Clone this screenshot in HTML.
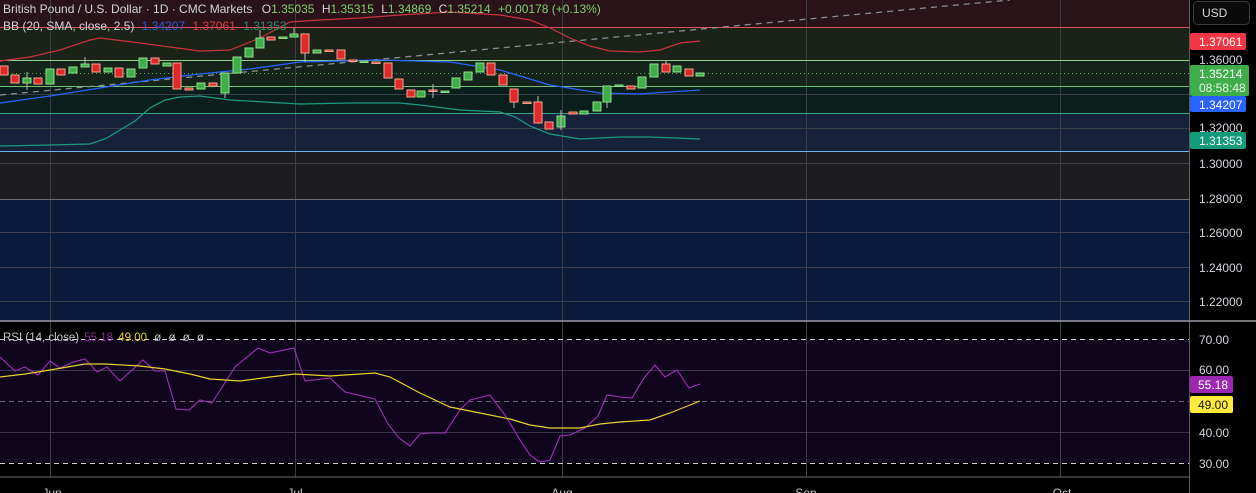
<!DOCTYPE html>
<html><head><meta charset="utf-8"><style>
html,body{margin:0;padding:0;background:#000;width:1256px;height:493px;overflow:hidden}
svg{display:block}
text{font-family:"Liberation Sans",sans-serif}
</style></head><body>
<svg width="1256" height="493" viewBox="0 0 1256 493" xmlns="http://www.w3.org/2000/svg">
<rect x="0" y="0" width="1189" height="27" fill="#2a1318"/>
<rect x="0" y="27" width="1189" height="33" fill="#1b2319"/>
<rect x="0" y="60" width="1189" height="26" fill="#14241a"/>
<rect x="0" y="86" width="1189" height="27" fill="#0a1f1b"/>
<rect x="0" y="113" width="1189" height="38" fill="#15223a"/>
<rect x="0" y="151" width="1189" height="48" fill="#1d1d1f"/>
<rect x="0" y="199" width="1189" height="122" fill="#0a1a3a"/>
<g stroke="#3a3f4a" stroke-width="1">
<line x1="50.5" y1="0" x2="50.5" y2="477"/><line x1="295.5" y1="0" x2="295.5" y2="477"/><line x1="562.5" y1="0" x2="562.5" y2="477"/><line x1="806.5" y1="0" x2="806.5" y2="477"/><line x1="1060.5" y1="0" x2="1060.5" y2="477"/>
<line x1="0" y1="94.5" x2="1189" y2="94.5"/><line x1="0" y1="128.5" x2="1189" y2="128.5"/><line x1="0" y1="163.5" x2="1189" y2="163.5"/><line x1="0" y1="232.5" x2="1189" y2="232.5"/><line x1="0" y1="267.5" x2="1189" y2="267.5"/><line x1="0" y1="301.5" x2="1189" y2="301.5"/>
</g>
<line x1="0" y1="199.5" x2="1189" y2="199.5" stroke="#6a6d75"/>
<line x1="0" y1="27.5" x2="1189" y2="27.5" stroke="#e0505a"/>
<line x1="0" y1="60.5" x2="1189" y2="60.5" stroke="#8fd08a"/>
<line x1="0" y1="86.5" x2="1189" y2="86.5" stroke="#6cc070"/>
<line x1="0" y1="113.5" x2="1189" y2="113.5" stroke="#3aa08a"/>
<line x1="0" y1="151.5" x2="1189" y2="151.5" stroke="#6ab4e8"/>
<line x1="0" y1="73.5" x2="1189" y2="73.5" stroke="#4caf50" stroke-dasharray="1,3"/>
<line x1="0" y1="95" x2="1010" y2="0" stroke="#8a8d95" stroke-width="1.3" stroke-dasharray="6,5"/>
<polyline fill="none" stroke="#c8343f" stroke-width="1.2" points="0,61 30,57 60,50 90,40 100,38 140,43 200,51 230,50 260,38 290,22 320,20 360,18 400,15 450,12 500,15 530,20 550,28 570,38 590,46 610,51 640,52 660,50 680,43 700,41"/>
<polyline fill="none" stroke="#2962ff" stroke-width="1.3" points="0,103 50,96 100,88 150,80 200,74 250,69 300,62 380,60 450,62 500,70 550,85 600,93 640,94 700,90"/>
<polyline fill="none" stroke="#1e9b80" stroke-width="1.2" points="0,146 50,145 90,144 105,139 120,130 135,121 150,108 165,100 180,97 200,96 230,100 300,104 350,103 400,103 420,105 460,110 500,112 515,117 530,126 550,134 580,139 620,137 650,137 700,139"/>
<g stroke-width="1">
<g fill="#e0292a" stroke="#f5a48c">
<rect x="0" y="66" width="8" height="9"/><rect x="11" y="75" width="8" height="8"/><rect x="34" y="78" width="8" height="6"/><rect x="57" y="69" width="8" height="6"/><rect x="92" y="64" width="8" height="8"/><rect x="115" y="68" width="8" height="9"/><rect x="151" y="58" width="8" height="6"/><rect x="173" y="63" width="8" height="26"/><rect x="185" y="88" width="8" height="2"/><rect x="209" y="83" width="8" height="3"/><rect x="267" y="37" width="8" height="3"/><rect x="301" y="34" width="8" height="19"/><rect x="325" y="50" width="8" height="1.5"/><rect x="337" y="50" width="8" height="9"/><rect x="349" y="60" width="8" height="1.5"/><rect x="372" y="62" width="8" height="1.5"/><rect x="384" y="63" width="8" height="15"/><rect x="395" y="79" width="8" height="10"/><rect x="407" y="90" width="8" height="7"/><rect x="429" y="90" width="8" height="1.5"/><rect x="487" y="63" width="8" height="12"/><rect x="499" y="75" width="8" height="10"/><rect x="510" y="89" width="8" height="13"/><rect x="523" y="102" width="8" height="1.5"/><rect x="534" y="102" width="8" height="21"/><rect x="545" y="122" width="8" height="7"/><rect x="569" y="112" width="8" height="2"/><rect x="627" y="86" width="8" height="3"/><rect x="662" y="64" width="8" height="8"/><rect x="685" y="69" width="8" height="7"/>
</g>
<g fill="#3fae4a" stroke="#8fdc8a">
<rect x="23" y="78" width="8" height="5"/><rect x="46" y="69" width="8" height="15"/><rect x="69" y="67" width="8" height="6"/><rect x="81" y="64" width="8" height="3"/><rect x="104" y="68" width="8" height="4"/><rect x="127" y="69" width="8" height="8"/><rect x="139" y="58" width="8" height="10"/><rect x="163" y="63" width="8" height="3"/><rect x="197" y="83" width="8" height="6"/><rect x="221" y="73" width="8" height="20"/><rect x="233" y="57" width="8" height="16"/><rect x="245" y="48" width="8" height="9"/><rect x="256" y="38" width="8" height="10"/><rect x="279" y="37" width="8" height="1.5"/><rect x="290" y="34" width="8" height="3"/><rect x="313" y="50" width="8" height="3"/><rect x="360" y="61" width="8" height="1.5"/><rect x="417" y="91" width="8" height="6"/><rect x="441" y="91" width="8" height="1.5"/><rect x="452" y="78" width="8" height="10"/><rect x="464" y="72" width="8" height="8"/><rect x="476" y="63" width="8" height="9"/><rect x="557" y="116" width="8" height="11"/><rect x="580" y="111" width="8" height="3"/><rect x="593" y="102" width="8" height="9"/><rect x="603" y="86" width="8" height="16"/><rect x="615" y="85" width="8" height="1.5"/><rect x="638" y="77" width="8" height="11"/><rect x="650" y="64" width="8" height="13"/><rect x="673" y="66" width="8" height="6"/><rect x="696" y="73" width="8" height="3"/>
</g>
</g>
<g stroke="#bbb" stroke-width="1">
<line x1="27" y1="72" x2="27" y2="78"/><line x1="27" y1="83" x2="27" y2="90"/><line x1="85" y1="57" x2="85" y2="64"/><line x1="225" y1="93" x2="225" y2="98"/><line x1="260" y1="30" x2="260" y2="38"/><line x1="294" y1="28" x2="294" y2="34"/><line x1="305" y1="53" x2="305" y2="62"/><line x1="433" y1="84" x2="433" y2="98"/><line x1="514" y1="102" x2="514" y2="108"/><line x1="561" y1="110" x2="561" y2="130"/><line x1="538" y1="96" x2="538" y2="102"/><line x1="607" y1="102" x2="607" y2="108"/><line x1="666" y1="60" x2="666" y2="64"/></g>
<text x="3" y="13" font-size="12" fill="#d1d4dc">British Pound / U.S. Dollar · 1D · CMC Markets <tspan dx="6">O</tspan><tspan fill="#7ed06e">1.35035</tspan> <tspan dx="4">H</tspan><tspan fill="#7ed06e">1.35315</tspan> <tspan dx="4">L</tspan><tspan fill="#7ed06e">1.34869</tspan> <tspan dx="4">C</tspan><tspan fill="#7ed06e">1.35214</tspan> <tspan dx="4" fill="#7ed06e">+0.00178 (+0.13%)</tspan></text>
<text x="3" y="30" font-size="12" fill="#d1d4dc">BB (20, SMA, close, 2.5) <tspan dx="4" fill="#2a5ad8">1.34207</tspan> <tspan dx="4" fill="#d83a40">1.37061</tspan> <tspan dx="4" fill="#1e8e72">1.31353</tspan></text>
<line x1="0" y1="321" x2="1256" y2="321" stroke="#9a9da5" stroke-width="1.5"/>
<rect x="0" y="339" width="1189" height="124" fill="#10051c"/>
<g stroke="#3a3448"><line x1="0" y1="370.5" x2="1189" y2="370.5"/><line x1="0" y1="432.5" x2="1189" y2="432.5"/></g>
<g stroke="#3a3f4a"><line x1="50.5" y1="322" x2="50.5" y2="477"/><line x1="295.5" y1="322" x2="295.5" y2="477"/><line x1="562.5" y1="322" x2="562.5" y2="477"/><line x1="806.5" y1="322" x2="806.5" y2="477"/><line x1="1060.5" y1="322" x2="1060.5" y2="477"/></g>
<line x1="0" y1="401.5" x2="1189" y2="401.5" stroke="#6a6470" stroke-dasharray="5,4"/>
<line x1="0" y1="339.5" x2="1189" y2="339.5" stroke="#d0d0d0" stroke-dasharray="5,4"/>
<line x1="0" y1="463.5" x2="1189" y2="463.5" stroke="#d0d0d0" stroke-dasharray="5,4"/>
<polyline fill="none" stroke="#a030b8" stroke-width="1.1" points="0,357 15,371 25,367 38,375 50,361 60,368 73,362 85,359 97,372 107,367 120,381 143,360 155,371 165,371 176,409 189,410 200,400 212,403 235,367 258,348 270,353 294,348 305,381 330,378 345,392 375,399 388,424 398,437 410,446 420,434 430,433 445,433 460,410 470,400 490,395 505,415 520,440 530,455 540,462 550,460 560,436 570,435 585,428 598,416 607,395 620,397 632,398 644,378 655,365 665,377 677,370 689,388 700,384"/>
<polyline fill="none" stroke="#e8d030" stroke-width="1.2" points="0,377 25,374 50,370 85,364 105,364 140,366 165,369 190,374 210,379 240,381 270,377 295,374 330,376 375,373 390,377 420,393 450,407 480,413 510,419 530,425 550,428 580,428 600,424 620,422 650,420 670,413 690,405 700,401"/>
<text x="3" y="341" font-size="11.5" fill="#c8c8cc">RSI (14, close) <tspan fill="#8a2a9a" dx="2">55.18</tspan> <tspan fill="#e8d030" dx="2">49.00</tspan> <tspan dx="4">ø</tspan> <tspan dx="4">ø</tspan> <tspan dx="4">ø</tspan> <tspan dx="4">ø</tspan></text>
<line x1="0" y1="477" x2="1256" y2="477" stroke="#6a6d75"/>
<g font-size="12" fill="#c8c8cc" text-anchor="middle"><text x="52" y="497">Jun</text><text x="295" y="497">Jul</text><text x="562" y="497">Aug</text><text x="806" y="497">Sep</text><text x="1062" y="497">Oct</text></g>
<rect x="1189" y="0" width="67" height="493" fill="#000"/>
<line x1="1189.5" y1="0" x2="1189.5" y2="493" stroke="#5a5d65"/>
<line x1="1189" y1="321" x2="1256" y2="321" stroke="#9a9da5" stroke-width="1.5"/>
<rect x="1193.5" y="1.5" width="56" height="23" rx="4" fill="#0a0a0a" stroke="#3a3a3a"/>
<text x="1202" y="17" font-size="12" fill="#d8d8d8">USD</text>
<g font-size="12" fill="#d1d4dc">
<text x="1199" y="64">1.36000</text><text x="1199" y="132">1.32000</text><text x="1199" y="168">1.30000</text><text x="1199" y="203">1.28000</text><text x="1199" y="237">1.26000</text><text x="1199" y="272">1.24000</text><text x="1199" y="306">1.22000</text>
<text x="1199" y="344">70.00</text><text x="1199" y="374">60.00</text><text x="1199" y="437">40.00</text><text x="1199" y="468">30.00</text>
</g>
<rect x="1190" y="33" width="56" height="17" rx="2" fill="#f23645"/><text x="1199" y="46" font-size="12" fill="#fff">1.37061</text>
<rect x="1190" y="65" width="59" height="31" rx="2" fill="#3fae4a"/><text x="1199" y="78" font-size="12" fill="#fff">1.35214</text><text x="1199" y="92" font-size="12" fill="#e6f5e6">08:58:48</text>
<rect x="1190" y="96" width="56" height="16" rx="2" fill="#2962ff"/><text x="1199" y="109" font-size="12" fill="#fff">1.34207</text>
<rect x="1190" y="132" width="56" height="17" rx="2" fill="#129a7a"/><text x="1199" y="145" font-size="12" fill="#fff">1.31353</text>
<rect x="1190" y="376" width="43" height="17" rx="2" fill="#9c27b0"/><text x="1198" y="389" font-size="12" fill="#fff">55.18</text>
<rect x="1190" y="396" width="43" height="17" rx="2" fill="#ffeb3b"/><text x="1198" y="409" font-size="12" fill="#111">49.00</text>
</svg>
</body></html>
